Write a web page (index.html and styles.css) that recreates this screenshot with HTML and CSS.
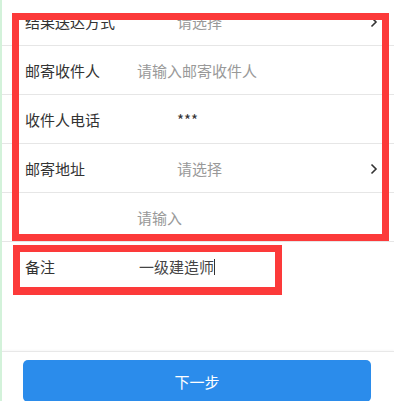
FILE: index.html
```html
<!DOCTYPE html>
<html lang="zh-CN">
<head>
  <meta charset="UTF-8" />
  <meta name="viewport" content="width=device-width, initial-scale=1.0"/>
  <title>邮寄信息</title>
  <link rel="stylesheet" href="styles.css">
</head>
<body>

<div class="page">

  <!-- Form -->
  <div class="form-list">
    <div class="form-row">
      <span class="label">结果送达方式</span>
      <span class="value placeholder select">请选择</span>
      <span class="arrow"><svg width="8" height="12" viewBox="0 0 8 12"><path d="M1.5 1.5 L6 6 L1.5 10.5" fill="none" stroke="#333" stroke-width="1.6"/></svg></span>
    </div>
    <div class="form-row">
      <span class="label">邮寄收件人</span>
      <span class="value placeholder">请输入邮寄收件人</span>
    </div>
    <div class="form-row">
      <span class="label">收件人电话</span>
      <span class="value select">***</span>
    </div>
    <div class="form-row">
      <span class="label">邮寄地址</span>
      <span class="value placeholder select">请选择</span>
      <span class="arrow"><svg width="8" height="12" viewBox="0 0 8 12"><path d="M1.5 1.5 L6 6 L1.5 10.5" fill="none" stroke="#333" stroke-width="1.6"/></svg></span>
    </div>
    <div class="form-row">
      <span class="label"></span>
      <span class="value placeholder">请输入</span>
    </div>
    <div class="form-row no-line">
      <span class="label">备注</span>
      <span class="value typed">一级建造师<i class="cursor"></i></span>
    </div>
  </div>

  <!-- Bottom bar -->
  <div class="footer">
    <button class="btn-next">下一步</button>
  </div>

  <!-- Annotation boxes -->
  <div class="mark mark-main"></div>
  <div class="mark mark-note"></div>

</div>

</body>
</html>
```

FILE: styles.css
```css
body {
  margin: 0;
  font-family: "Noto Sans CJK SC", "Noto Sans", sans-serif;
  background: #fff;
}

.page {
  position: relative;
  width: 394px;
  height: 401px;
  box-sizing: border-box;
  border-left: 2px solid #d3f2da;
  display: flex;
  flex-direction: column;
  overflow: hidden;
}

.form-list {
  margin-top: -3px;
}

.form-row {
  display: flex;
  align-items: center;
  height: 49px;
  padding: 0 16px 0 23px;
  border-bottom: 1px solid #e6e6e6;
  box-sizing: border-box;
  font-size: 15px;
}

.form-row.no-line {
  border-bottom: none;
}

.label {
  width: 112px;
  color: #333;
  flex-shrink: 0;
}

.value {
  flex: 1;
  color: #333;
}

.value.select {
  padding-left: 40px;
}

.placeholder {
  color: #999;
}

.typed {
  color: #444;
  padding-left: 2px;
}

.cursor {
  display: inline-block;
  width: 1px;
  height: 16px;
  background: #333;
  vertical-align: -2px;
}

.arrow {
  display: flex;
  align-items: center;
  margin-top: 2px;
}

.footer {
  margin-top: auto;
  height: 50px;
  border-top: 1px solid #e8e8e8;
  box-shadow: 0 -1px 2px rgba(0,0,0,0.03);
  padding: 8px 21px 0 21px;
  box-sizing: border-box;
}

.btn-next {
  width: 348px;
  height: 42px;
  border: none;
  border-radius: 5px;
  background: #2b8ceb;
  color: #fff;
  font-family: inherit;
  font-size: 15px;
  cursor: pointer;
}

/* red annotation frames drawn over the form */
.mark {
  position: absolute;
  border: 7px solid #fc3a3a;
  box-sizing: border-box;
}

.mark-main {
  left: 10px;
  top: 13px;
  width: 377px;
  height: 228px;
}

.mark-note {
  left: 11px;
  top: 245px;
  width: 269px;
  height: 50px;
  border-bottom-width: 8px;
}
```
